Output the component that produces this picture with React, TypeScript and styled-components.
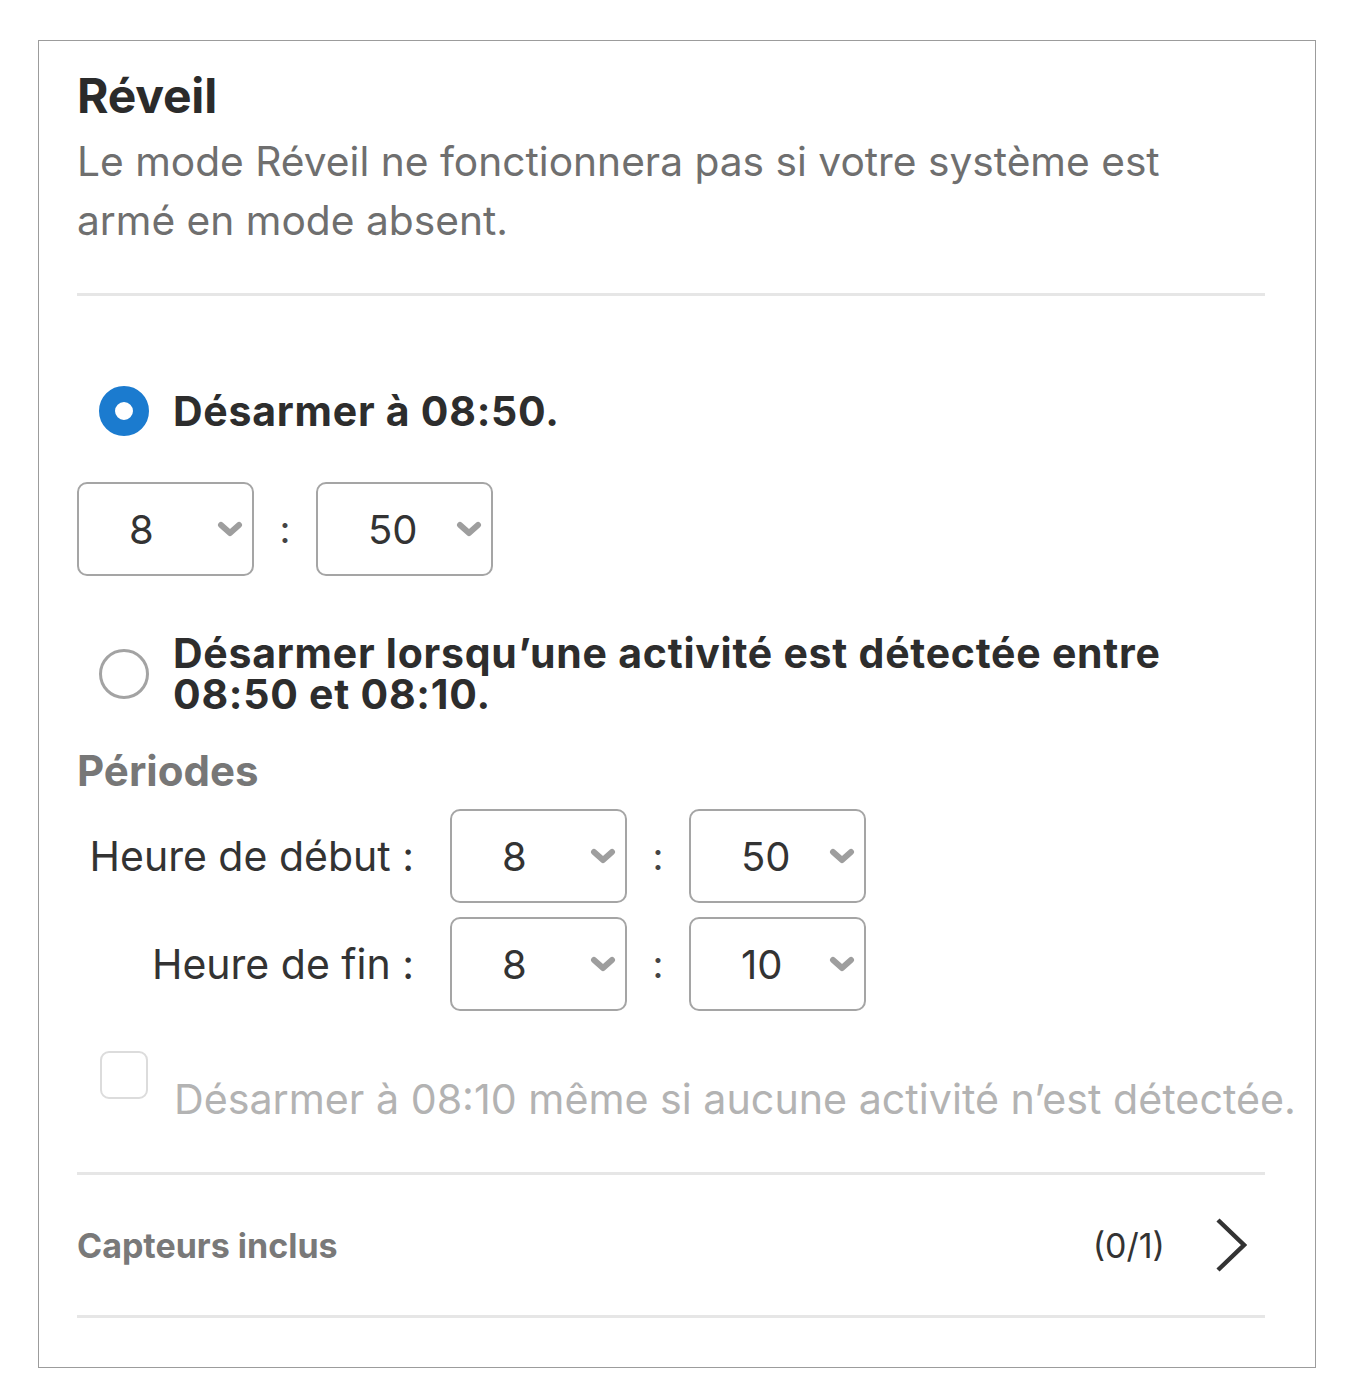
import styled, { createGlobalStyle } from 'styled-components';

const GlobalStyle = createGlobalStyle`
  html, body {
    margin: 0;
    padding: 0;
    background: #ffffff;
  }
  body {
    font-family: Inter, "Noto Sans", "Liberation Sans", sans-serif;
    color: #2e2e2e;
  }
`;

const Page = styled.main`
  padding: 40px 0 40px 38px;
`;

const Card = styled.section`
  box-sizing: border-box;
  width: 1278px;
  border: 1px solid #9c9c9c;
  padding: 27px 50px 49px 38px;
`;

const Title = styled.h1`
  margin: 0;
  font-size: 48px;
  line-height: 56px;
  font-weight: 700;
  color: #2b2b2b;
  letter-spacing: -0.2px;
`;

const Subtitle = styled.p`
  margin: 8px 0 0;
  font-size: 40.7px;
  line-height: 59px;
  font-weight: 400;
  color: #6f6f6f;
`;

const Divider = styled.hr<{ $top: number }>`
  margin: ${({ $top }) => $top}px 0 0;
  border: 0;
  height: 3px;
  background: #e6e6e6;
`;

const OptionRow = styled.div<{ $top: number }>`
  display: flex;
  align-items: center;
  gap: 24px;
  margin-top: ${({ $top }) => $top}px;
  padding-left: 22px;
`;

const Radio = styled.span<{ $checked?: boolean }>`
  box-sizing: border-box;
  flex: none;
  width: 50px;
  height: 50px;
  border-radius: 50%;
  background: #ffffff;
  border: ${({ $checked }) => ($checked ? '16px solid #1b7bcf' : '3px solid #a3a3a3')};
`;

const OptionLabel = styled.span`
  font-size: 41px;
  line-height: 41px;
  font-weight: 700;
  letter-spacing: 0.75px;
  color: #2d2d2d;
`;

const TimeRow = styled.div<{ $top?: number }>`
  display: flex;
  align-items: center;
  margin-top: ${({ $top }) => $top ?? 0}px;
`;

const SelectBox = styled.div`
  box-sizing: border-box;
  width: 177px;
  height: 94px;
  border: 2px solid #a5a5a5;
  border-radius: 10px;
  display: flex;
  align-items: center;
  justify-content: space-between;
  padding: 0 9px 0 50px;
  font-size: 40px;
  color: #333333;
  background: #ffffff;
`;

const Colon = styled.span`
  width: 62px;
  text-align: center;
  font-size: 38px;
  color: #444444;
`;

const SectionLabel = styled.h2`
  margin: 33px 0 0;
  font-size: 42px;
  line-height: 46px;
  font-weight: 700;
  color: #777777;
`;

const PeriodGrid = styled.div`
  display: grid;
  grid-template-columns: 337px auto;
  column-gap: 36px;
  row-gap: 14px;
  align-items: center;
  margin-top: 15px;
`;

const PeriodLabel = styled.span`
  justify-self: end;
  font-size: 41px;
  color: #333333;
`;

const CheckRow = styled.label`
  display: flex;
  align-items: flex-start;
  gap: 26px;
  margin-top: 40px;
  padding-left: 23px;
`;

const CheckBox = styled.span`
  box-sizing: border-box;
  flex: none;
  width: 48px;
  height: 48px;
  border: 2px solid #dcdcdc;
  border-radius: 9px;
`;

const CheckText = styled.span`
  padding-top: 24px;
  font-size: 41.2px;
  line-height: 48px;
  color: #b3b3b3;
  white-space: nowrap;
`;

const SensorsRow = styled.div`
  display: flex;
  align-items: center;
  padding: 43px 18px 43px 0;
`;

const SensorsLabel = styled.span`
  flex: 1;
  font-size: 34px;
  font-weight: 700;
  color: #797979;
`;

const SensorsCount = styled.span`
  font-size: 34px;
  color: #333333;
  margin-right: 50px;
`;

const Chevron = () => (
  <svg width="26" height="16" viewBox="0 0 26 16" fill="none">
    <path d="M4 4 L13 12 L22 4" stroke="#9e9e9e" strokeWidth="6" strokeLinecap="round" strokeLinejoin="round" />
  </svg>
);

const ChevronRight = () => (
  <svg width="32" height="54" viewBox="0 0 32 54" fill="none">
    <path d="M3 2 L29 27 L3 52" stroke="#333333" strokeWidth="4.5" strokeLinejoin="miter" />
  </svg>
);

const Select = ({ value }: { value: string }) => (
  <SelectBox>
    <span>{value}</span>
    <Chevron />
  </SelectBox>
);

const TimePicker = ({ hour, minute, top }: { hour: string; minute: string; top?: number }) => (
  <TimeRow $top={top}>
    <Select value={hour} />
    <Colon>:</Colon>
    <Select value={minute} />
  </TimeRow>
);

const App = () => {
  return (
    <Page>
      <GlobalStyle />
      <Card>
        <Title>Réveil</Title>
        <Subtitle>
          Le mode Réveil ne fonctionnera pas si votre système est
          <br />
          armé en mode absent.
        </Subtitle>
        <Divider $top={43} />

        <OptionRow $top={90}>
          <Radio $checked />
          <OptionLabel>Désarmer à 08:50.</OptionLabel>
        </OptionRow>
        <TimePicker hour="8" minute="50" top={46} />

        <OptionRow $top={57}>
          <Radio />
          <OptionLabel>
            Désarmer lorsqu’une activité est détectée entre
            <br />
            08:50 et 08:10.
          </OptionLabel>
        </OptionRow>

        <SectionLabel>Périodes</SectionLabel>
        <PeriodGrid>
          <PeriodLabel>Heure de début :</PeriodLabel>
          <TimePicker hour="8" minute="50" />
          <PeriodLabel>Heure de fin :</PeriodLabel>
          <TimePicker hour="8" minute="10" />
        </PeriodGrid>

        <CheckRow>
          <CheckBox />
          <CheckText>Désarmer à 08:10 même si aucune activité n’est détectée.</CheckText>
        </CheckRow>

        <Divider $top={49} />
        <SensorsRow>
          <SensorsLabel>Capteurs inclus</SensorsLabel>
          <SensorsCount>(0/1)</SensorsCount>
          <ChevronRight />
        </SensorsRow>
        <Divider $top={0} />
      </Card>
    </Page>
  );
};

export default App;
